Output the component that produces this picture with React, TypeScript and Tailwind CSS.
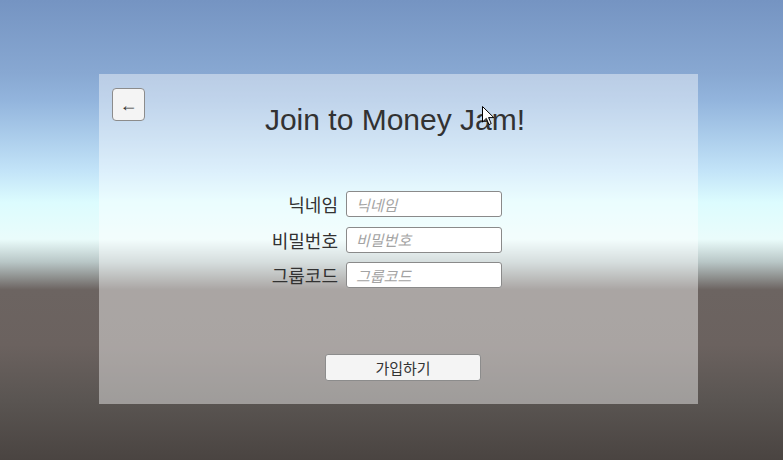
import { useState } from 'react';

const fields = [
  { key: 'nickname', label: '닉네임', type: 'text' },
  { key: 'password', label: '비밀번호', type: 'password' },
  { key: 'group', label: '그룹코드', type: 'text' },
];

export default function App() {
  const [values, setValues] = useState<Record<string, string>>({});

  return (
    <main className="relative h-[460px] w-full overflow-hidden bg-[linear-gradient(to_bottom,#7594c2_0%,#88a8d2_16%,#93b5dd_22%,#c2e3f8_37%,#dcfcfe_44%,#eafcfb_52%,#b8c6c6_57%,#6c6461_63%,#6b625f_75%,#5a5552_87%,#4a4441_100%)] pt-[74px] pl-[99px] font-['Liberation_Sans','Noto_Sans_CJK_KR',sans-serif] text-[#323232]">
      <div className="flex h-[330px] w-[599px] flex-col bg-white/[0.42] px-[13px] pt-[14px]">
        <div className="grid grid-cols-[33px_1fr_40px] items-start">
          <button className="flex h-[33px] w-[33px] items-center justify-center rounded-[4px] border border-[#8c8c8c] bg-[#f4f4f4] text-[18px] leading-none text-[#333]">
            ←
          </button>
          <h1 className="mt-[15px] text-center text-[30px] leading-[34px] font-normal">
            Join to Money Jam!
          </h1>
          <div />
        </div>

        <div className="mt-[54px] ml-[146px] grid grid-cols-[80px_156px] gap-x-[8px] gap-y-[9.5px]">
          {fields.map((f) => (
            <div key={f.key} className="contents">
              <label className="flex h-[26px] items-center justify-end font-['Noto_Sans_CJK_KR',sans-serif] text-[18px] leading-none">
                {f.label}
              </label>
              <input
                type={f.type}
                placeholder={f.label}
                value={values[f.key] || ''}
                onChange={(e) => setValues({ ...values, [f.key]: e.target.value })}
                className="h-[26px] rounded-[3px] border border-[#8a8a8a] bg-white pl-[9px] font-['Noto_Sans_CJK_KR',sans-serif] text-[15px] outline-none placeholder:italic placeholder:text-[#a3a3a3]"
              />
            </div>
          ))}
        </div>

        <button className="mt-[66px] ml-[213px] h-[27px] w-[156px] rounded-[3px] border border-[#8c8c8c] bg-[#f4f4f4] font-['Noto_Sans_CJK_KR',sans-serif] text-[15px] leading-none text-[#333]">
          가입하기
        </button>
      </div>

      <svg
        className="absolute top-[106px] left-[482px]"
        width="13"
        height="20"
        viewBox="0 0 13 20"
      >
        <path
          d="M0.5 0.5 L0.5 16 L4.3 12.4 L7 18.6 L9.2 17.6 L6.6 11.6 L11.8 11.6 Z"
          fill="white"
          stroke="black"
          strokeWidth="1"
          strokeLinejoin="round"
        />
      </svg>
    </main>
  );
}
